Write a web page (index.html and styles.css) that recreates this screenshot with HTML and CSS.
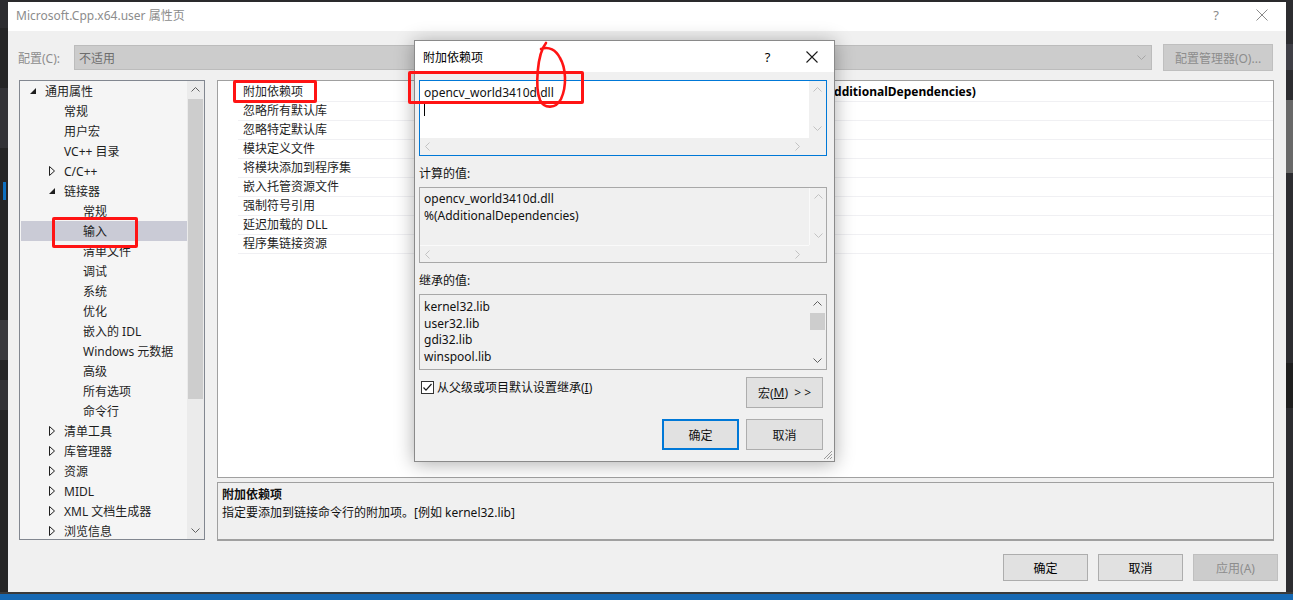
FILE: index.html
```html
<!DOCTYPE html>
<html>
<head>
<meta charset="utf-8">
<title>属性页</title>
<link rel="stylesheet" href="styles.css">
</head>
<body>
<div class="screen">
  <div class="desk">
    <div class="strip-left">
      <div class="sl-a"></div><div class="sl-b"></div><div class="sl-c"></div><div class="sl-d"></div><div class="sl-e"></div>
    </div>
    <div class="window">
      <div class="titlebar">
        <span class="title">Microsoft.Cpp.x64.user 属性页</span>
        <span class="tb-btn tb-help">?</span>
        <span class="tb-btn tb-close"><svg width="12" height="12" viewBox="0 0 12 12"><path d="M0.5 0.5 L11.5 11.5 M11.5 0.5 L0.5 11.5" stroke="#8a8a8a" stroke-width="1" fill="none"/></svg></span>
      </div>
      <div class="config-row">
        <span class="cfg-label">配置(C):</span>
        <div class="combo"><span class="combo-text">不适用</span><svg class="combo-chev" width="9" height="5" viewBox="0 0 9 5"><path d="M0.5 0.5 L4.5 4.5 L8.5 0.5" stroke="#a6a6a6" fill="none"/></svg></div>
        <div class="cfg-btn">配置管理器(O)...</div>
      </div>
      <div class="main">
        <div class="tree">
          <div class="tree-list">
            <div class="trow l0"><span class="exp"><svg width="6" height="6" viewBox="0 0 6 6"><path d="M6 0 L6 6 L0 6Z" fill="#1e1e1e"/></svg></span>通用属性</div>
            <div class="trow l1"><span class="exp"></span>常规</div>
            <div class="trow l1"><span class="exp"></span>用户宏</div>
            <div class="trow l1"><span class="exp"></span>VC++ 目录</div>
            <div class="trow l1"><span class="exp"><svg width="6" height="10" viewBox="0 0 6 10"><path d="M0.5 0.5 L5.5 5 L0.5 9.5Z" fill="none" stroke="#1e1e1e"/></svg></span>C/C++</div>
            <div class="trow l1"><span class="exp"><svg width="6" height="6" viewBox="0 0 6 6"><path d="M6 0 L6 6 L0 6Z" fill="#1e1e1e"/></svg></span>链接器</div>
            <div class="trow l2"><span class="exp"></span>常规</div>
            <div class="trow l2 sel"><span class="exp"></span>输入</div>
            <div class="trow l2"><span class="exp"></span>清单文件</div>
            <div class="trow l2"><span class="exp"></span>调试</div>
            <div class="trow l2"><span class="exp"></span>系统</div>
            <div class="trow l2"><span class="exp"></span>优化</div>
            <div class="trow l2"><span class="exp"></span>嵌入的 IDL</div>
            <div class="trow l2"><span class="exp"></span>Windows 元数据</div>
            <div class="trow l2"><span class="exp"></span>高级</div>
            <div class="trow l2"><span class="exp"></span>所有选项</div>
            <div class="trow l2"><span class="exp"></span>命令行</div>
            <div class="trow l1"><span class="exp"><svg width="6" height="10" viewBox="0 0 6 10"><path d="M0.5 0.5 L5.5 5 L0.5 9.5Z" fill="none" stroke="#1e1e1e"/></svg></span>清单工具</div>
            <div class="trow l1"><span class="exp"><svg width="6" height="10" viewBox="0 0 6 10"><path d="M0.5 0.5 L5.5 5 L0.5 9.5Z" fill="none" stroke="#1e1e1e"/></svg></span>库管理器</div>
            <div class="trow l1"><span class="exp"><svg width="6" height="10" viewBox="0 0 6 10"><path d="M0.5 0.5 L5.5 5 L0.5 9.5Z" fill="none" stroke="#1e1e1e"/></svg></span>资源</div>
            <div class="trow l1"><span class="exp"><svg width="6" height="10" viewBox="0 0 6 10"><path d="M0.5 0.5 L5.5 5 L0.5 9.5Z" fill="none" stroke="#1e1e1e"/></svg></span>MIDL</div>
            <div class="trow l1"><span class="exp"><svg width="6" height="10" viewBox="0 0 6 10"><path d="M0.5 0.5 L5.5 5 L0.5 9.5Z" fill="none" stroke="#1e1e1e"/></svg></span>XML 文档生成器</div>
            <div class="trow l1"><span class="exp"><svg width="6" height="10" viewBox="0 0 6 10"><path d="M0.5 0.5 L5.5 5 L0.5 9.5Z" fill="none" stroke="#1e1e1e"/></svg></span>浏览信息</div>
          </div>
          <div class="tscroll">
            <div class="sarrow"><svg width="9" height="5" viewBox="0 0 9 5"><path d="M0.5 4.5 L4.5 0.5 L8.5 4.5" stroke="#606060" fill="none"/></svg></div>
            <div class="tthumb"></div>
            <div class="sarrow bottom"><svg width="9" height="5" viewBox="0 0 9 5"><path d="M0.5 0.5 L4.5 4.5 L8.5 0.5" stroke="#606060" fill="none"/></svg></div>
          </div>
        </div>
        <div class="right-col">
          <div class="grid">
            <div class="grow"><span class="gutter"></span><span class="gname">附加依赖项</span><span class="gval bold">opencv_world3410d.dll;%(AdditionalDependencies)</span></div>
            <div class="grow"><span class="gutter"></span><span class="gname">忽略所有默认库</span><span class="gval"></span></div>
            <div class="grow"><span class="gutter"></span><span class="gname">忽略特定默认库</span><span class="gval"></span></div>
            <div class="grow"><span class="gutter"></span><span class="gname">模块定义文件</span><span class="gval"></span></div>
            <div class="grow"><span class="gutter"></span><span class="gname">将模块添加到程序集</span><span class="gval"></span></div>
            <div class="grow"><span class="gutter"></span><span class="gname">嵌入托管资源文件</span><span class="gval"></span></div>
            <div class="grow"><span class="gutter"></span><span class="gname">强制符号引用</span><span class="gval"></span></div>
            <div class="grow"><span class="gutter"></span><span class="gname">延迟加载的 DLL</span><span class="gval"></span></div>
            <div class="grow"><span class="gutter"></span><span class="gname">程序集链接资源</span><span class="gval"></span></div>
          </div>
          <div class="desc">
            <div class="desc-title">附加依赖项</div>
            <div>指定要添加到链接命令行的附加项。[例如 kernel32.lib]</div>
          </div>
        </div>
      </div>
      <div class="footer">
        <div class="btn">确定</div>
        <div class="btn">取消</div>
        <div class="btn disabled">应用(A)</div>
      </div>

      <div class="dialog">
        <div class="dlg-title">
          <span class="dlg-title-text">附加依赖项</span>
          <span class="dlg-help">?</span>
          <span class="dlg-close"><svg width="12" height="12" viewBox="0 0 12 12"><path d="M0.5 0.5 L11.5 11.5 M11.5 0.5 L0.5 11.5" stroke="#1a1a1a" stroke-width="1.1" fill="none"/></svg></span>
        </div>
        <div class="dlg-body">
          <div class="box edit">
            <div class="box-text">opencv_world3410d.dll<br><span class="caret"></span></div>
            <div class="vs">
              <svg width="9" height="5" viewBox="0 0 9 5"><path d="M0.5 4.5 L4.5 0.5 L8.5 4.5" stroke="#c2c2c2" fill="none"/></svg>
              <svg width="9" height="5" viewBox="0 0 9 5"><path d="M0.5 0.5 L4.5 4.5 L8.5 0.5" stroke="#c2c2c2" fill="none"/></svg>
            </div>
            <div class="hs">
              <svg width="5" height="9" viewBox="0 0 5 9"><path d="M4.5 0.5 L0.5 4.5 L4.5 8.5" stroke="#c2c2c2" fill="none"/></svg>
              <svg width="5" height="9" viewBox="0 0 5 9"><path d="M0.5 0.5 L4.5 4.5 L0.5 8.5" stroke="#c2c2c2" fill="none"/></svg>
            </div>
            <div class="corner"></div>
          </div>
          <div class="dlg-label">计算的值:</div>
          <div class="box ro">
            <div class="box-text">opencv_world3410d.dll<br>%(AdditionalDependencies)</div>
            <div class="vs">
              <svg width="9" height="5" viewBox="0 0 9 5"><path d="M0.5 4.5 L4.5 0.5 L8.5 4.5" stroke="#c2c2c2" fill="none"/></svg>
              <svg width="9" height="5" viewBox="0 0 9 5"><path d="M0.5 0.5 L4.5 4.5 L8.5 0.5" stroke="#c2c2c2" fill="none"/></svg>
            </div>
            <div class="hs">
              <svg width="5" height="9" viewBox="0 0 5 9"><path d="M4.5 0.5 L0.5 4.5 L4.5 8.5" stroke="#c2c2c2" fill="none"/></svg>
              <svg width="5" height="9" viewBox="0 0 5 9"><path d="M0.5 0.5 L4.5 4.5 L0.5 8.5" stroke="#c2c2c2" fill="none"/></svg>
            </div>
            <div class="corner"></div>
          </div>
          <div class="dlg-label">继承的值:</div>
          <div class="box inh">
            <div class="box-text list">kernel32.lib<br>user32.lib<br>gdi32.lib<br>winspool.lib</div>
            <div class="ivs">
              <div class="iarrow"><svg width="9" height="5" viewBox="0 0 9 5"><path d="M0.5 4.5 L4.5 0.5 L8.5 4.5" stroke="#606060" fill="none"/></svg></div>
              <div class="ithumb"></div>
              <div class="iarrow down"><svg width="9" height="5" viewBox="0 0 9 5"><path d="M0.5 0.5 L4.5 4.5 L8.5 0.5" stroke="#606060" fill="none"/></svg></div>
            </div>
          </div>
          <div class="opt-row">
            <span class="check"><svg width="11" height="11" viewBox="0 0 11 11"><path d="M1.5 5.5 L4 8.2 L9.5 2" stroke="#1a1a1a" stroke-width="1.2" fill="none"/></svg></span>
            <span class="check-label">从父级或项目默认设置继承(<u>I</u>)</span>
            <div class="dbtn macro">宏(<u>M</u>)&nbsp;&nbsp;&gt; &gt;</div>
          </div>
          <div class="dlg-buttons">
            <div class="dbtn primary">确定</div>
            <div class="dbtn">取消</div>
          </div>
        </div>
        <svg class="grip" width="10" height="10" viewBox="0 0 10 10"><path d="M9 1 L1 9 M9 4 L4 9 M9 7 L7 9" stroke="#9a9a9a" stroke-width="1" fill="none"/></svg>
      </div>
    </div>
    <div class="strip-right">
      <div class="sr-a"></div><div class="sr-b"></div><div class="sr-c"></div>
    </div>
  </div>
  <div class="taskbar"></div>

  <div class="mark mark-tree"></div>
  <div class="mark mark-grid"></div>
  <div class="mark mark-dlg"></div>
  <svg class="scribble" width="40" height="72" viewBox="530 40 40 72"><path d="M546 43 C 537 54, 535 88, 540 100 C 544 109, 556 109, 561 99 C 567 86, 566 68, 560 58 C 556 50, 549 46, 541 49" stroke="#ff1414" stroke-width="2.6" fill="none" stroke-linecap="round"/></svg>
</div>
</body>
</html>
```
FILE: styles.css
```css
* { box-sizing: border-box; margin: 0; padding: 0; }
body {
  width: 1293px; height: 600px; overflow: hidden;
  background: #2d2d30;
  font-family: "Noto Sans", "Noto Sans CJK SC", sans-serif;
  font-size: 12px; color: #000;
}
.screen { position: relative; width: 1293px; height: 600px; display: flex; flex-direction: column; }
.desk { display: flex; height: 592px; }
.strip-left { width: 8px; background: #252526; display: flex; flex-direction: column; }
.sl-a { height: 28px; background: #2d2d30; }
.sl-b { height: 60px; margin-top: 60px; background: #333337; }
.sl-c { height: 18px; margin-top: 34px; background: #0e70c0; width: 3px; margin-left: 3px; }
.sl-d { height: 40px; margin-top: 120px; background: #3a3a3e; }
.sl-e { height: 30px; margin-top: 20px; background: #333337; }
.strip-right { flex: 1; background: #2d2d30; display: flex; flex-direction: column; }
.sr-a { height: 26px; margin-top: 44px; background: #3f3f46; }
.sr-b { height: 73px; margin-top: 30px; background: #686868; }
.sr-c { height: 45px; margin-top: 190px; background: #1e1e1e; }
.taskbar { height: 8px; background: #1769b3; border-top: 2px solid #3a3a3a; }

.window {
  width: 1278px; background: #f0f0f0; position: relative;
  display: flex; flex-direction: column;
  border-top: 2px solid #2a2a2c;
}
.titlebar { height: 29px; background: #fff; display: flex; align-items: center; padding-left: 8px; padding-bottom: 3px; color: #8c8c8c; }
.title { flex: 1; }
.tb-btn { width: 46px; height: 26px; display: flex; align-items: center; justify-content: center; }
.tb-help { font-size: 13px; color: #8a8a8a; }
.tb-close { margin-right: 1px; }

.config-row { margin-top: 13px; height: 27px; display: flex; align-items: center; padding-left: 10px; }
.cfg-label { width: 56px; color: #8d8d8d; }
.combo {
  width: 1078px; height: 25px; background: #cccccc; border: 1px solid #bcbcbc;
  display: flex; align-items: center; padding-left: 4px; padding-right: 5px; color: #6d6d6d;
}
.combo-text { flex: 1; }
.cfg-btn {
  margin-left: 11px; width: 110px; height: 27px; background: #cccccc; border: 1px solid #bfbfbf;
  color: #8d8d8d; display: flex; align-items: center; justify-content: center;
}

.main { margin-top: 9px; height: 461px; display: flex; padding-left: 11px; gap: 12px; }
.tree { width: 186px; height: 460px; border: 1px solid #828790; background: #f5f5f5; display: flex; }
.tree-list { flex: 1; padding-left: 1px; }
.trow { height: 20px; display: flex; align-items: center; color: #1e1e1e; }
.trow.l0 { padding-left: 9px; }
.trow.l1 { padding-left: 28px; }
.trow.l2 { padding-left: 47px; }
.trow.sel { background: #cacbd6; }
.exp { width: 15px; display: flex; align-items: center; }
.tscroll { width: 17px; background: #ebebeb; display: flex; flex-direction: column; }
.sarrow { height: 17px; display: flex; align-items: center; justify-content: center; }
.sarrow.bottom { margin-top: auto; }
.tthumb { height: 300px; margin: 1px 1px 0; background: #cdcdcd; }

.right-col { width: 1057px; display: flex; flex-direction: column; }
.grid { height: 398px; border: 1px solid #a0a0a0; background: #fff; padding-top: 2px; }
.grow { height: 19px; display: flex; }
.gutter { width: 20px; }
.gname { width: 428px; padding-left: 5px; line-height: 18px; border-bottom: 1px solid #f0f0f3; color: #1e1e1e; }
.gval { flex: 1; padding-left: 6px; line-height: 18px; border-bottom: 1px solid #f0f0f3; }
.gval.bold { font-weight: bold; }
.desc {
  margin-top: 4px; height: 59px; border: 1px solid #a0a0a0; border-bottom-width: 2px;
  background: #f0f0f0; padding: 3px 4px; line-height: 18px; color: #111;
}
.desc-title { font-weight: bold; }

.footer { margin-top: 13px; height: 27px; display: flex; justify-content: flex-end; gap: 10px; padding-right: 8px; }
.btn {
  width: 85px; height: 27px; background: #e1e1e1; border: 1px solid #adadad;
  display: flex; align-items: center; justify-content: center;
}
.btn.disabled { background: #cccccc; border-color: #bfbfbf; color: #8d8d8d; }

/* dialog overlay */
.dialog {
  position: absolute; left: 406px; top: 38px; width: 421px; height: 422px;
  border: 1px solid #8a8a8a; background: #f0f0f0;
  box-shadow: 0 2px 18px rgba(0,0,0,0.32);
  display: flex; flex-direction: column;
}
.dlg-title { height: 31px; background: #fff; display: flex; align-items: center; padding-left: 8px; }
.dlg-title-text { flex: 1; }
.dlg-help { width: 45px; text-align: center; font-size: 13px; }
.dlg-close { width: 44px; display: flex; justify-content: center; }
.dlg-body { padding: 8px 7px 0 4px; display: flex; flex-direction: column; }
.box { height: 76px; display: grid; grid-template-columns: 1fr 17px; grid-template-rows: 1fr 17px; }
.edit { border: 1px solid #0078d7; background: #fff; }
.ro { border: 1px solid #a8a8a8; background: #f0f0f0; }
.box-text { padding: 3px 4px; line-height: 17px; color: #111; overflow: hidden; }
.ro .box-text { padding-top: 2px; }
.caret { display: inline-block; width: 1px; height: 14px; background: #000; vertical-align: -2px; }
.vs { background: #f0f0f0; display: flex; flex-direction: column; align-items: center; justify-content: space-between; padding: 6px 0 7px; }
.hs { background: #f0f0f0; display: flex; align-items: center; justify-content: space-between; padding: 0 9px 0 5px; }
.corner { background: #f0f0f0; }
.ro .vs { border-left: 1px solid #fafafa; }
.ro .hs { border-top: 1px solid #fafafa; }
.dlg-label { height: 31px; padding-top: 9px; line-height: 17px; color: #111; }
.inh { grid-template-rows: 1fr; border: 1px solid #a8a8a8; background: #f0f0f0; }
.box-text.list { padding-top: 4px; line-height: 16.7px; }
.ivs { display: flex; flex-direction: column; background: #f0f0f0; }
.iarrow { height: 17px; display: flex; align-items: center; justify-content: center; }
.iarrow.down { margin-top: auto; }
.ithumb { height: 17px; margin: 1px 1px 0; background: #cdcdcd; }

.opt-row { margin-top: 7px; height: 31px; display: flex; align-items: flex-start; padding-left: 2px; }
.check {
  width: 13px; height: 13px; margin-top: 4px; border: 1px solid #333; background: #fff;
  display: flex; align-items: center; justify-content: center;
}
.check-label { margin-left: 3px; margin-top: 2px; line-height: 17px; color: #111; }
.dbtn {
  width: 77px; height: 31px; background: #e1e1e1; border: 1px solid #adadad;
  display: flex; align-items: center; justify-content: center; color: #111;
}
.dbtn.macro { margin-left: auto; margin-right: 4px; }
.dbtn.primary { border: 2px solid #0078d7; }
.dlg-buttons { margin-top: 11px; display: flex; justify-content: flex-end; gap: 7px; padding-right: 4px; }
.grip { position: absolute; right: 1px; bottom: 1px; }

/* red annotations drawn over the screenshot */
.mark { position: absolute; border: 3px solid #ff1414; border-radius: 2px; }
.mark-tree { left: 52px; top: 217px; width: 86px; height: 31px; }
.mark-grid { left: 233px; top: 80px; width: 84px; height: 23px; }
.mark-dlg { left: 408px; top: 71px; width: 176px; height: 33px; }
.scribble { position: absolute; left: 530px; top: 40px; }
```
